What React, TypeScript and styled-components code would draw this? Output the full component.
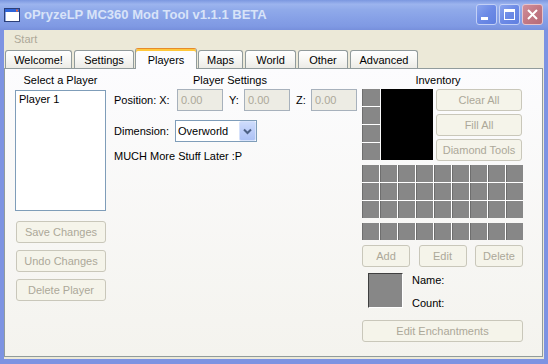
import React from "react";
import styled, { createGlobalStyle } from "styled-components";

const Global = createGlobalStyle`
  html, body { margin: 0; padding: 0; }
  body {
    width: 548px;
    height: 364px;
    overflow: hidden;
    font-family: "Liberation Sans", Arial, sans-serif;
    font-size: 11px;
    color: #000;
  }
  * { box-sizing: border-box; }
`;

const Window = styled.div`
  width: 548px;
  height: 364px;
  display: flex;
  flex-direction: column;
  background: #7d93e2;
`;

const TitleBar = styled.div`
  height: 30px;
  flex-shrink: 0;
  display: flex;
  align-items: flex-start;
  padding-left: 4px;
  background: linear-gradient(
    180deg,
    #7b97e0 0%,
    #9cb4ee 14%,
    #90aaea 32%,
    #87a1e7 60%,
    #7f99e3 88%,
    #7790dc 100%
  );
`;

const AppIcon = styled.svg`
  margin-top: 8px;
  flex-shrink: 0;
`;

const TitleText = styled.div`
  margin-left: 4px;
  margin-top: 7px;
  font-family: "Liberation Sans", Arial, sans-serif;
  font-weight: bold;
  font-size: 13px;
  line-height: 16px;
  color: #d8e3f8;
  white-space: nowrap;
`;

const CaptionButtons = styled.div`
  margin-left: auto;
  margin-right: 5px;
  margin-top: 4px;
  display: flex;
  gap: 2px;
`;

const CaptionButton = styled.div<{ $close?: boolean }>`
  width: 21px;
  height: 21px;
  border-radius: 3px;
  border: 1px solid ${(p) => (p.$close ? "#e6c3cb" : "#c3d0f6")};
  background: ${(p) =>
    p.$close
      ? "linear-gradient(135deg, #d08f9a 0%, #c27884 50%, #b66b78 100%)"
      : "linear-gradient(135deg, #8aa5ee 0%, #6c8ae6 50%, #5f7fe0 100%)"};
  display: flex;
  align-items: center;
  justify-content: center;
`;

const Frame = styled.div`
  flex: 1;
  display: flex;
  padding: 0 4px 5px 4px;
  min-height: 0;
`;

const Client = styled.div`
  flex: 1;
  display: flex;
  flex-direction: column;
  background: #ece9d8;
  padding: 0 1px 2px 0;
  min-height: 0;
`;

const MenuBar = styled.div`
  height: 18px;
  flex-shrink: 0;
  padding-left: 10px;
  line-height: 18px;
  color: #aca899;
`;

const TabStrip = styled.div`
  height: 20px;
  flex-shrink: 0;
  display: flex;
  align-items: flex-end;
  position: relative;
  z-index: 1;
`;

const Tab = styled.div<{ $w: number; $ml: number; $active?: boolean }>`
  width: ${(p) => p.$w}px;
  margin-left: ${(p) => p.$ml}px;
  height: ${(p) => (p.$active ? 21 : 18)}px;
  margin-bottom: ${(p) => (p.$active ? -1 : 0)}px;
  border: 1px solid #919b9c;
  border-bottom: none;
  border-radius: 3px 3px 0 0;
  border-top-color: ${(p) => (p.$active ? "#e68b2c" : "#919b9c")};
  background: ${(p) =>
    p.$active
      ? "#fcfcfe"
      : "linear-gradient(180deg, #ffffff 0%, #f7f7f4 50%, #ecebe6 100%)"};
  box-shadow: ${(p) => (p.$active ? "inset 0 2px 0 #ffc83c" : "none")};
  display: flex;
  align-items: center;
  justify-content: center;
  padding-top: ${(p) => (p.$active ? 1 : 0)}px;
  white-space: nowrap;
`;

const Panel = styled.div`
  flex: 1;
  border: 1px solid #919b9c;
  background: linear-gradient(180deg, #fcfcfe 0%, #f4f3ee 100%);
  display: flex;
  align-items: flex-start;
  padding: 5px 0 0 10px;
  min-height: 0;
`;

const Column = styled.div<{ $w: number; $ml: number }>`
  width: ${(p) => p.$w}px;
  margin-left: ${(p) => p.$ml}px;
  flex-shrink: 0;
  display: flex;
  flex-direction: column;
`;

const Heading = styled.div<{ $pr?: number }>`
  height: 13px;
  line-height: 13px;
  text-align: center;
  padding-right: ${(p) => p.$pr ?? 0}px;
  white-space: nowrap;
`;

const ListBox = styled.div`
  margin-top: 3px;
  height: 121px;
  border: 1px solid #7f9db9;
  background: #fff;
  padding: 2px 3px;
  line-height: 13px;
`;

const ButtonStack = styled.div`
  margin-top: 10px;
  padding-left: 1px;
  display: flex;
  flex-direction: column;
  gap: 7px;
`;

const XPButton = styled.button<{ $w: number }>`
  width: ${(p) => p.$w}px;
  height: 22px;
  flex-shrink: 0;
  border: 1px solid #c9c7ba;
  border-radius: 3px;
  background: #f5f4ea;
  color: #aca899;
  font-family: inherit;
  font-size: 11px;
  padding: 0;
  white-space: nowrap;
`;

const FieldRow = styled.div<{ $mt: number }>`
  display: flex;
  align-items: center;
  height: 22px;
  margin-top: ${(p) => p.$mt}px;
`;

const FieldLabel = styled.span<{ $w: number; $ml?: number }>`
  width: ${(p) => p.$w}px;
  margin-left: ${(p) => p.$ml ?? 0}px;
  flex-shrink: 0;
  white-space: nowrap;
`;

const TextBox = styled.div`
  width: 46px;
  height: 22px;
  flex-shrink: 0;
  border: 1px solid #a7b1bc;
  background: #edece4;
  color: #aca899;
  padding-left: 3px;
  line-height: 20px;
`;

const Select = styled.div`
  width: 82px;
  height: 22px;
  flex-shrink: 0;
  border: 1px solid #7f9db9;
  background: #fff;
  display: flex;
  align-items: stretch;
`;

const SelectValue = styled.span`
  flex: 1;
  padding-left: 2px;
  line-height: 20px;
  white-space: nowrap;
`;

const DropButton = styled.div`
  width: 17px;
  border: 1px solid #d7e2fb;
  border-radius: 2px;
  background: linear-gradient(180deg, #cedcfc 0%, #bccdf8 50%, #adc2f5 100%);
  display: flex;
  align-items: center;
  justify-content: center;
`;

const Note = styled.div`
  margin-top: 8px;
  line-height: 13px;
  white-space: nowrap;
`;

const InvTop = styled.div`
  margin-top: 2px;
  display: flex;
  align-items: flex-start;
`;

const ArmorCol = styled.div`
  width: 18px;
  display: grid;
  grid-template-rows: repeat(4, 17px);
  row-gap: 1px;
  background: #fff;
`;

const Slot = styled.div`
  background: #878787;
  box-shadow: inset 1px 0 0 #6e6e6e;
`;

const BlackBox = styled.div`
  width: 52px;
  height: 71px;
  margin-left: 1px;
  background: #000;
`;

const SideButtons = styled.div`
  margin-left: 3px;
  display: flex;
  flex-direction: column;
  gap: 3px;
`;

const SlotGrid = styled.div<{ $mt: number }>`
  margin-top: ${(p) => p.$mt}px;
  display: grid;
  grid-template-columns: repeat(9, 17px);
  grid-auto-rows: 17px;
  gap: 1px;
  background: #fff;
`;

const ActionRow = styled.div`
  margin-top: 5px;
  display: flex;
  justify-content: space-between;
`;

const ItemRow = styled.div`
  margin-top: 6px;
  padding-left: 6px;
  display: flex;
  align-items: flex-start;
`;

const Preview = styled.div`
  width: 35px;
  height: 35px;
  flex-shrink: 0;
  background: #878787;
  border: 1px solid;
  border-color: #3f3f3f #ffffff #ffffff #3f3f3f;
`;

const ItemLabels = styled.div`
  margin-left: 9px;
  padding-top: 1px;
  display: flex;
  flex-direction: column;
  gap: 10px;
  line-height: 13px;
`;

const Wide = styled(XPButton)`
  margin-top: 10px;
`;

const tabs = [
  { label: "Welcome!", w: 67, ml: 1 },
  { label: "Settings", w: 60, ml: 2 },
  { label: "Players", w: 62, ml: 1, active: true },
  { label: "Maps", w: 45, ml: 1 },
  { label: "World", w: 51, ml: 2 },
  { label: "Other", w: 50, ml: 2 },
  { label: "Advanced", w: 68, ml: 2 },
];

export default function App() {
  return (
    <>
      <Global />
      <Window>
        <TitleBar>
          <AppIcon width="16" height="14" viewBox="0 0 16 14">
            <rect x="0.5" y="0.5" width="15" height="13" fill="#ffffff" stroke="#2c3f78" />
            <rect x="1" y="1" width="14" height="3" fill="#2f64d8" />
            <rect x="12" y="1.5" width="2" height="2" fill="#e8663c" />
            <rect x="1" y="4" width="1" height="9" fill="#8fa8e4" />
          </AppIcon>
          <TitleText>oPryzeLP MC360 Mod Tool v1.1.1 BETA</TitleText>
          <CaptionButtons>
            <CaptionButton>
              <svg width="19" height="19" viewBox="0 0 19 19">
                <rect x="4" y="12" width="7" height="3" fill="#fff" />
              </svg>
            </CaptionButton>
            <CaptionButton>
              <svg width="19" height="19" viewBox="0 0 19 19">
                <rect x="4.5" y="4.5" width="10" height="10" fill="none" stroke="#fff" />
                <rect x="4" y="4" width="11" height="3" fill="#fff" />
              </svg>
            </CaptionButton>
            <CaptionButton $close>
              <svg width="19" height="19" viewBox="0 0 19 19">
                <path d="M5 5 L14 14 M14 5 L5 14" stroke="#fff" strokeWidth="2" />
              </svg>
            </CaptionButton>
          </CaptionButtons>
        </TitleBar>
        <Frame>
          <Client>
            <MenuBar>Start</MenuBar>
            <TabStrip>
              {tabs.map((t) => (
                <Tab key={t.label} $w={t.w} $ml={t.ml} $active={t.active}>
                  {t.label}
                </Tab>
              ))}
            </TabStrip>
            <Panel>
              <Column $w={91} $ml={0}>
                <Heading>Select a Player</Heading>
                <ListBox>Player 1</ListBox>
                <ButtonStack>
                  <XPButton $w={90} disabled>Save Changes</XPButton>
                  <XPButton $w={90} disabled>Undo Changes</XPButton>
                  <XPButton $w={90} disabled>Delete Player</XPButton>
                </ButtonStack>
              </Column>
              <Column $w={243} $ml={8}>
                <Heading $pr={11}>Player Settings</Heading>
                <FieldRow $mt={2}>
                  <FieldLabel $w={63}>Position: X:</FieldLabel>
                  <TextBox>0.00</TextBox>
                  <FieldLabel $w={15} $ml={6}>Y:</FieldLabel>
                  <TextBox>0.00</TextBox>
                  <FieldLabel $w={15} $ml={6}>Z:</FieldLabel>
                  <TextBox>0.00</TextBox>
                </FieldRow>
                <FieldRow $mt={9}>
                  <FieldLabel $w={61}>Dimension:</FieldLabel>
                  <Select>
                    <SelectValue>Overworld</SelectValue>
                    <DropButton>
                      <svg width="9" height="7" viewBox="0 0 9 7">
                        <path d="M1 1.5 L4.5 5 L8 1.5" fill="none" stroke="#4d6185" strokeWidth="2" />
                      </svg>
                    </DropButton>
                  </Select>
                </FieldRow>
                <Note>MUCH More Stuff Later :P</Note>
              </Column>
              <Column $w={161} $ml={5}>
                <Heading $pr={9}>Inventory</Heading>
                <InvTop>
                  <ArmorCol>
                    {Array.from({ length: 4 }).map((_, i) => (
                      <Slot key={i} />
                    ))}
                  </ArmorCol>
                  <BlackBox />
                  <SideButtons>
                    <XPButton $w={86} disabled>Clear All</XPButton>
                    <XPButton $w={86} disabled>Fill All</XPButton>
                    <XPButton $w={86} disabled>Diamond Tools</XPButton>
                  </SideButtons>
                </InvTop>
                <SlotGrid $mt={4}>
                  {Array.from({ length: 27 }).map((_, i) => (
                    <Slot key={i} />
                  ))}
                </SlotGrid>
                <SlotGrid $mt={5}>
                  {Array.from({ length: 9 }).map((_, i) => (
                    <Slot key={i} />
                  ))}
                </SlotGrid>
                <ActionRow>
                  <XPButton $w={48} disabled>Add</XPButton>
                  <XPButton $w={48} disabled>Edit</XPButton>
                  <XPButton $w={48} disabled>Delete</XPButton>
                </ActionRow>
                <ItemRow>
                  <Preview />
                  <ItemLabels>
                    <span>Name:</span>
                    <span>Count:</span>
                  </ItemLabels>
                </ItemRow>
                <Wide $w={161} disabled>Edit Enchantments</Wide>
              </Column>
            </Panel>
          </Client>
        </Frame>
      </Window>
    </>
  );
}
